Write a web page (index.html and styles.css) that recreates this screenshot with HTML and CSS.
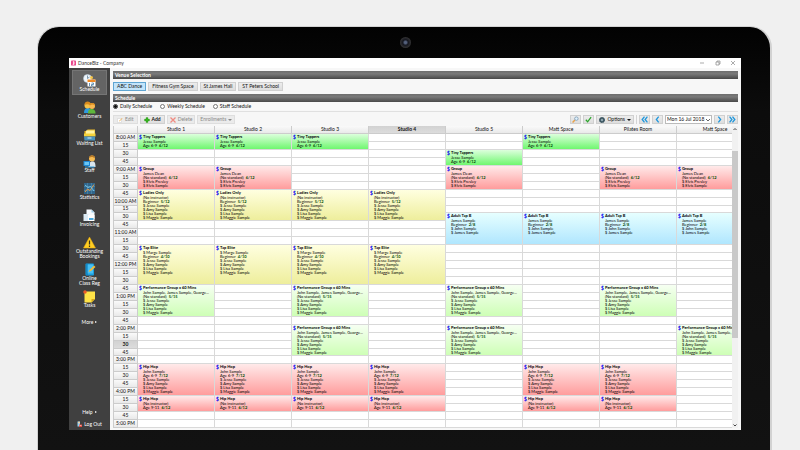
FILE: index.html
```html
<!DOCTYPE html>
<html lang="en">
<head>
<meta charset="utf-8">
<title>DanceBiz - Company</title>
<link rel="stylesheet" href="styles.css">
</head>
<body>
<div class="monitor">
  <div class="bezel"><span class="camera"></span></div>
  <div class="screen">
    <header class="titlebar">
      <svg class="logo" viewBox="0 0 12 12"><rect width="12" height="12" rx="2" fill="#e8468c"/><path d="M4 2h3l2 2-2 2 2 2-2 2H3l3-2-2-2 2-2z" fill="#fff"/></svg>
      <span class="apptitle">DanceBiz - Company</span>
      <svg class="winctl" viewBox="0 0 36 6"><path d="M1 3h4M17 2h3v3h-3zM18 2V1h3v3h-1M32 1l4 4M36 1l-4 4" fill="none" stroke="#888" stroke-width=".7"/></svg>
    </header>
    <div class="body">
      <nav class="sidebar">
        <a href="#" class="item active"><svg viewBox="0 0 26 26"><circle cx="9" cy="9" r="8" fill="#eef6fc" stroke="#b9cbd8"/><path d="M9 3v6l4-3" fill="none" stroke="#5b7890" stroke-width="1.5"/><circle cx="17" cy="7" r="3" fill="#f7c748"/><rect x="9" y="11" width="16" height="14" rx="1" fill="#fff"/><path d="M9 11h16v5H9z" fill="#f08a24"/><path d="M13 18v6M17 18h4v3h-4v3h4" fill="none" stroke="#39719c" stroke-width="1.5"/></svg><span>Schedule</span></a>
        <a href="#" class="item"><svg viewBox="0 0 26 26"><path d="M2 24c0-8 4-10 8-10s7 3 7 10z" fill="#2f9be0"/><path d="M10 25c0-7 3-9 7-9s8 2 8 9z" fill="#5fb83c"/><circle cx="9" cy="9" r="6" fill="#f5c24a"/><circle cx="18" cy="10" r="6" fill="#f9b851"/><path d="M3 8c0-9 11-8 12-3 5-3 9 0 9 4-4-3-7-3-10 0-3-3-7-3-11-1z" fill="#d98b1d"/></svg><span>Customers</span></a>
        <a href="#" class="item"><svg viewBox="0 0 26 26"><path d="M3 13V6h4l2-3h15v10z" fill="#e9b92c"/><path d="M6 5h17v10H6z" fill="#fff3a1"/><path d="M2 11h23v6H2z" fill="#f4d23a"/><path d="M2 17h22v8H3z" fill="#4a93bd"/><path d="M9 20h8" stroke="#d4edf9" stroke-width="2"/></svg><span>Waiting List</span></a>
        <a href="#" class="item"><svg viewBox="0 0 26 26"><circle cx="18" cy="7" r="6" fill="#f7bd54"/><path d="M12 6c1-8 12-7 12 1-4-3-7-4-12-1z" fill="#b97a27"/><path d="M11 24c0-8 3-11 8-11s6 4 6 11z" fill="#d9e5ee"/><path d="M1 12h13v10H1z" fill="#1e88d6"/><path d="M3 14h9v6H3z" fill="#6bc6f5"/><path d="M4 24h19" stroke="#2b9de3" stroke-width="2"/></svg><span>Staff</span></a>
        <a href="#" class="item"><svg viewBox="0 0 26 26"><rect x="2" y="2" width="22" height="22" fill="#30658a"/><path d="M2 9h22M2 17h22M9 2v22M17 2v22" stroke="#5e99b9"/><path d="M4 20l5-6 5 3 8-12" fill="none" stroke="#e39a47" stroke-width="2"/><path d="M4 6l6 5 5-2 7 9" fill="none" stroke="#72c4e8" stroke-width="2"/></svg><span>Statistics</span></a>
        <a href="#" class="item"><svg viewBox="0 0 26 26"><path d="M7 1h10l6 6v13H7z" fill="#f7fbff"/><path d="M17 1v6h6z" fill="#9dcbe8"/><path d="M1 10h10v14H1z" fill="#dcebf5"/><path d="M10 12h13v12H10z" fill="#fff"/><path d="M12 22v-4h9v4z" fill="#4ba9de"/></svg><span>Invoicing</span></a>
        <a href="#" class="item"><svg viewBox="0 0 26 26"><path d="M13 2l12 22H1z" fill="#ffcd22" stroke="#e6a60c" stroke-linejoin="round"/><path d="M13 9v8M13 19v3" stroke="#3b3517" stroke-width="2.5"/></svg><span>Outstanding<br>Bookings</span></a>
        <a href="#" class="item"><svg viewBox="0 0 26 26"><rect x="5" y="1" width="17" height="24" rx="2" fill="#1b9fe0"/><path d="M8 3h12v18H8z" fill="#47c0f5"/><path d="M8 1v24" stroke="#0875b2" stroke-width="2"/><path d="M11 18l2-4 9-9 3 3-9 8z" fill="#f2bc3a"/></svg><span>Online<br>Class Reg</span></a>
        <a href="#" class="item"><svg viewBox="0 0 26 26"><path d="M3 3h21v15l-7 7H3z" fill="#ffe347"/><path d="M17 25v-7h7z" fill="#d5a81b"/><circle cx="4" cy="4" r="3.500" fill="#ed5c27"/></svg><span>Tasks</span></a>
        <a href="#" class="more">More <i class="tri"></i></a>
        <a href="#" class="more help">Help <i class="tri"></i></a>
        <a href="#" class="more logout"><svg viewBox="0 0 10 12"><path d="M1 1h5v10H1z" fill="#8fd0f3"/><circle cx="4" cy="3" r="2" fill="#f4d0a0"/><path d="M4 7h6v5H4z" fill="#e2483d"/><path d="M5 9h4" stroke="#fff"/></svg>Log Out</a>
      </nav>
      <main class="main">
        <h2 class="bar">Venue Selection</h2>
        <div class="venues">
          <button class="btn on">ABC Dance</button>
          <button class="btn">Fitness Gym Space</button>
          <button class="btn">St James Hall</button>
          <button class="btn">ST Peters School</button>
        </div>
        <h2 class="bar">Schedule</h2>
        <div class="views">
          <label><input type="radio" name="view" checked>Daily Schedule</label>
          <label><input type="radio" name="view">Weekly Schedule</label>
          <label><input type="radio" name="view">Staff Schedule</label>
        </div>
        <div class="toolbar">
          <button class="btn tool off edit" disabled><svg viewBox="0 0 12 12"><path d="M1 3h8v8H1z" fill="#fff" stroke="#ccc"/><path d="M4 8l6-6 1 1-6 6z" fill="#efb45c"/></svg>Edit</button>
          <button class="btn tool add"><svg viewBox="0 0 12 12"><path d="M4 1h4v3h3v4H8v3H4V8H1V4h3z" fill="#35b21f" stroke="#23850f" stroke-width=".5"/></svg>Add</button>
          <button class="btn tool off" disabled><svg viewBox="0 0 12 12"><path d="M1 1l10 10M11 1L1 11" stroke="#f08b82" stroke-width="2.500"/></svg>Delete</button>
          <button class="btn tool off" disabled>Enrollments <i class="caret"></i></button>
          <span class="space"></span>
          <button class="btn sq" aria-label="Search"><svg viewBox="0 0 12 12"><path d="M1 11l4-4" stroke="#e9a24a" stroke-width="2.500"/><circle cx="7.500" cy="4.500" r="3" fill="#dff0fb" stroke="#6d90ad" stroke-width="1.200"/></svg></button>
          <button class="btn sq" aria-label="Confirm"><svg viewBox="0 0 12 12"><path d="M1.500 6.500l3 3.500 6-8" fill="none" stroke="#2ca52c" stroke-width="2.200"/></svg></button>
          <button class="btn tool opts"><svg viewBox="0 0 12 12"><circle cx="6" cy="6" r="4" fill="#8ea5af" stroke="#3d5762" stroke-width="3"/><circle cx="6" cy="6" r="5" fill="none" stroke="#3d5762" stroke-width="2" stroke-dasharray="2 2"/></svg>Options <i class="caret"></i></button>
          <span class="sep"></span>
          <button class="btn sq" aria-label="First"><svg viewBox="0 0 12 12"><path d="M6 1L2 6l4 5M11 1L7 6l4 5" fill="none" stroke="#1e96dc" stroke-width="2.200"/></svg></button>
          <button class="btn sq" aria-label="Previous"><svg viewBox="0 0 12 12"><path d="M8 1L4 6l4 5" fill="none" stroke="#1e96dc" stroke-width="2.200"/></svg></button>
          <select class="date" aria-label="Date"><option>Mon 16 Jul 2018</option></select>
          <button class="btn sq" aria-label="Next"><svg viewBox="0 0 12 12"><path d="M4 1l4 5-4 5" fill="none" stroke="#1e96dc" stroke-width="2.200"/></svg></button>
          <button class="btn sq" aria-label="Last"><svg viewBox="0 0 12 12"><path d="M1 1l4 5-4 5M6 1l4 5-4 5" fill="none" stroke="#1e96dc" stroke-width="2.200"/></svg></button>
        </div>
        <div class="sheet">
          <div class="viewport"><table class="grid" id="grid"></table></div>
          <div class="scroll">
            <svg viewBox="0 0 6 6"><path d="M1.500 4L3 2.500 4.500 4" fill="none" stroke="#444"/></svg>
            <span class="thumb"></span>
            <svg viewBox="0 0 6 6"><path d="M1.500 2.500L3 4l1.500-1.500" fill="none" stroke="#444"/></svg>
          </div>
        </div>
      </main>
    </div>
  </div>
</div>
<script src="schedule.js"></script>
</body>
</html>
```
FILE: styles.css
```css
* { box-sizing: border-box; }
body {
  margin: 0;
  height: 100vh;
  padding: 26px 28px 0 37px;
  overflow: hidden;
  background: #f0f0f0;
  font: 5px/5px Lato, "Open Sans", sans-serif;
  color: #111;
}
button, select, input { font: inherit; color: inherit; margin: 0; }
a { color: inherit; text-decoration: none; }
svg { display: block; }

.monitor {
  height: 100%;
  display: flex;
  flex-direction: column;
  padding: 0 29px 20px 31px;
  background: linear-gradient(#020202, #0c0c0c 20%, #121212);
  border: 1px solid #d2d2d2;
  border-width: 1px 2px 0 1px;
  border-radius: 22px 22px 0 0;
}
.bezel { height: 31px; flex: none; display: flex; justify-content: center; padding-top: 10px; }
.camera {
  width: 11px; height: 11px;
  border-radius: 50%;
  background: radial-gradient(#54607c 0 15%, #15171f 35%, #2b2b2f 60%, #333 70%);
}
.screen { flex: 1; min-height: 0; display: flex; flex-direction: column; background: #f7f7f7; }
.titlebar { height: 10px; flex: none; display: flex; align-items: center; gap: 2px; padding: 0 6px 0 2px; background: #fff; }
.logo { width: 5px; height: 6px; }
.apptitle { flex: 1; color: #333; }
.winctl { width: 36px; height: 6px; }
.body { flex: 1; min-height: 0; display: flex; }

.sidebar {
  width: 41px; flex: none;
  display: flex; flex-direction: column; align-items: center;
  padding: 2px 2px 3px;
  background: #404040;
  color: #fff;
  text-align: center;
}
.item { width: 35px; height: 27px; padding-top: 4px; display: flex; flex-direction: column; align-items: center; white-space: nowrap; }
.item.active { background: #646464; border: 1px solid #757575; height: 25px; margin-bottom: 2px; padding-top: 3px; }
.item svg { width: 13px; height: 13px; flex: none; }
.more { display: flex; align-items: center; gap: 2px; margin-top: 6px; line-height: 6px; }
.tri { border: 1px solid transparent; border-left: 2px solid #fff; border-right: 0; }
.help { margin-top: auto; }
.logout svg { width: 5px; height: 6px; }

.main { flex: 1; min-width: 0; display: flex; flex-direction: column; padding: 3px 3px 2px; }
.bar {
  flex: none; height: 8px; margin: 0; padding: 0 2px;
  font-size: 5px; line-height: 8px; color: #fff;
  background: linear-gradient(#6e6e6e, #7a7a7a 35%, #484848);
}
.venues { flex: none; display: flex; gap: 2px; padding: 3px 0; }
.btn {
  height: 9px; padding: 0 3px;
  display: flex; align-items: center; gap: 2px;
  line-height: 7px;
  background: linear-gradient(#ececec, #dedede);
  border: 1px solid #d0d0d0;
  white-space: nowrap;
}
.btn.on { background: #c3e4fa; border-color: #5fa5d2; }
.views { flex: none; height: 10px; display: flex; align-items: center; gap: 8px; border-bottom: 1px solid #e0e0e0; }
.views label { display: flex; align-items: center; gap: 2px; }
.views input {
  appearance: none; width: 5px; height: 5px;
  border: 1px solid #777; border-radius: 50%; background: #fff;
}
.views input:checked { background: radial-gradient(#111 0 1px, #fff 2px); border-color: #333; }

.toolbar { flex: none; display: flex; align-items: center; gap: 2px; padding: 3px 0 2px; }
.tool svg { width: 6px; height: 6px; }
.tool { padding: 0 2px; }
.tool.off { color: #888; background: #ebebeb; border-color: #dedede; }
.tool.edit, .tool.add { padding: 0 3px; }
.add { font-weight: bold; }
.sq { width: 11px; padding: 0; justify-content: center; }
.sq svg { width: 7px; height: 7px; }
.caret { border: 2px solid transparent; border-top-color: currentColor; border-bottom: 0; }
.space { flex: 1; }
.sep { width: 1px; height: 9px; background: #d5d5d5; }
.date {
  appearance: none; width: 47px; height: 9px; padding: 0 1px;
  border: 1px solid #bbb; border-radius: 0;
  background:
    linear-gradient(45deg, transparent 45%, #666 45% 60%, transparent 60%) 40px 3px / 2px 2px no-repeat,
    linear-gradient(-45deg, transparent 45%, #666 45% 60%, transparent 60%) 42px 3px / 2px 2px no-repeat,
    #fff;
}

.sheet { flex: 1; min-height: 0; display: flex; }
.viewport { flex: 1; min-width: 0; overflow: hidden; border-left: 1px solid #ccc; }
.grid {
  height: 100%;
  display: grid;
  grid-template-columns: 24px repeat(8, 77px);
  grid-template-rows: 8px repeat(37, minmax(0, 1fr));
}
.grid thead, .grid tbody, .grid tr { display: contents; }
.grid th, .grid td { min-width: 0; min-height: 0; padding: 0; overflow: hidden; border: solid #d9d9d9; border-width: 0 1px 1px 0; background: #fff; }
.grid th {
  display: flex; align-items: center; justify-content: center;
  font-weight: normal;
  background: linear-gradient(#fafafa, #e9e9e9);
  border-color: #ccc;
}
.grid th.current { font-weight: bold; background: linear-gradient(#d2d2d2, #dcdcdc); }
.grid td.event {
  z-index: 1;
  display: flex; align-items: flex-start; gap: 1px;
  padding-left: 1px;
  font-size: 4px;
  line-height: 4px;
  white-space: nowrap;
  color: #000;
}
.event .pay { width: 3px; flex: none; font-size: 5px; font-weight: 900; line-height: 6px; color: #1010f0; }
.event ul, .event p { margin: 0; padding: 0; list-style: none; }
.event .name { font-weight: bold; line-height: 6px; }
.event b { color: #064f06; }
.event.green { background: linear-gradient(#dcffdc, #6ff76f); }
.event.red { background: linear-gradient(#ffeaea, #ff9c9c); }
.event.yellow { background: linear-gradient(#ffffe0, #eeee9c); }
.event.blue { background: linear-gradient(#e6ffff, #b0e6fe); }
.event.lime { background: linear-gradient(#f6fff2, #ceffb6); }

.scroll { width: 6px; flex: none; display: flex; flex-direction: column; background: #f1f1f1; }
.scroll svg { width: 6px; height: 6px; }
.thumb { height: 62%; margin: 19px 0 auto; background: #c9c9c9; }
```
FILE: schedule.js
```js
const rooms = ["Studio 1", "Studio 2", "Studio 3", "Studio 4", "Studio 5", "Matt Space", "Pilates Room", "Matt Space"];
const currentRoom = 3;
const currentSlot = 26;
const slots = 37;

const family = ["$ Jesse Sample", "$ Amy Sample", "$ Lisa Sample", "$ Maggie Sample"];
const performers = "John Sample, James Sample, George...";
const classes = [
  { name: "Tiny Tappers", color: "green", who: "Jesse Sample", level: "Age 6-9", count: "6/12", start: 0, span: 2, rooms: [0, 1, 2, 5] },
  { name: "Tiny Tappers", color: "green", who: "Jesse Sample", level: "Age 6-9", count: "6/12", start: 2, span: 2, rooms: [4] },
  { name: "Group", color: "red", who: "James Dean", level: "(No standard)", count: "6/12", people: ["$ Elvis Presley", "$ Elvis Sample"], start: 4, span: 3, rooms: [0, 1, 4, 6, 7] },
  { name: "Ladies Only", color: "yellow", who: "(No instructor)", level: "Beginner", count: "5/12", people: family, start: 7, span: 4, rooms: [0, 1, 2, 3] },
  { name: "Adult Tap B", color: "blue", who: "James Sample", level: "Beginner", count: "2/8", people: ["$ John Sample", "$ James Sample"], start: 10, span: 4, rooms: [4, 5, 6, 7] },
  { name: "Tap Elite", color: "yellow", who: "$ Marge Sample", level: "Beginner", count: "4/10", people: family, start: 14, span: 5, rooms: [0, 1, 2, 3] },
  { name: "Performance Group x 60 Mins", color: "lime", who: performers, level: "(No standard)", count: "5/15", people: family, start: 19, span: 4, rooms: [0, 2, 4, 6] },
  { name: "Performance Group x 60 Mins", color: "lime", who: performers, level: "(No standard)", count: "5/15", people: family, start: 24, span: 4, rooms: [2, 4, 7] },
  { name: "Hip Hop", color: "red", who: "John Sample", level: "Age 6-9", count: "7/12", people: family, start: 29, span: 4, rooms: [0, 1, 2, 3, 5, 6] },
  { name: "Hip Hop", color: "red", who: "(No instructor)", level: "Age 9-11", count: "6/12", start: 33, span: 2, rooms: [0, 1, 2, 3, 5, 6] }
];

function slotLabel(slot) {
  const hour = 8 + Math.floor(slot / 4);
  const minute = (slot % 4) * 15;
  if (minute) return String(minute);
  return `${hour > 12 ? hour - 12 : hour}:00 ${hour < 12 ? "AM" : "PM"}`;
}

function place(row, column, span) {
  return `style="grid-area:${row}/${column}/span ${span}"`;
}

function eventCell(c, room) {
  const people = (c.people || []).map(p => `<li>${p}</li>`).join("");
  return `<td class="event ${c.color}" rowspan="${c.span}" ${place(c.start + 2, room + 2, c.span)}>
    <span class="pay">$</span>
    <div><p class="name">${c.name}</p><p>${c.who}</p><p>${c.level} &nbsp;<b>${c.count}</b></p><ul>${people}</ul></div></td>`;
}

let html = `<thead><tr><th ${place(1, 1, 1)}></th>`;
rooms.forEach((name, i) => {
  html += `<th scope="col" class="${i === currentRoom ? "current" : ""}" ${place(1, i + 2, 1)}>${name}</th>`;
});
html += "</tr></thead><tbody>";
for (let slot = 0; slot < slots; slot++) {
  html += `<tr><th scope="row" class="${slot === currentSlot ? "current" : ""}" ${place(slot + 2, 1, 1)}>${slotLabel(slot)}</th>`;
  rooms.forEach((_, room) => {
    const c = classes.find(k => k.rooms.includes(room) && slot >= k.start && slot < k.start + k.span);
    if (!c) html += `<td ${place(slot + 2, room + 2, 1)}></td>`;
    else if (c.start === slot) html += eventCell(c, room);
  });
  html += "</tr>";
}
document.getElementById("grid").innerHTML = html + "</tbody>";
```
